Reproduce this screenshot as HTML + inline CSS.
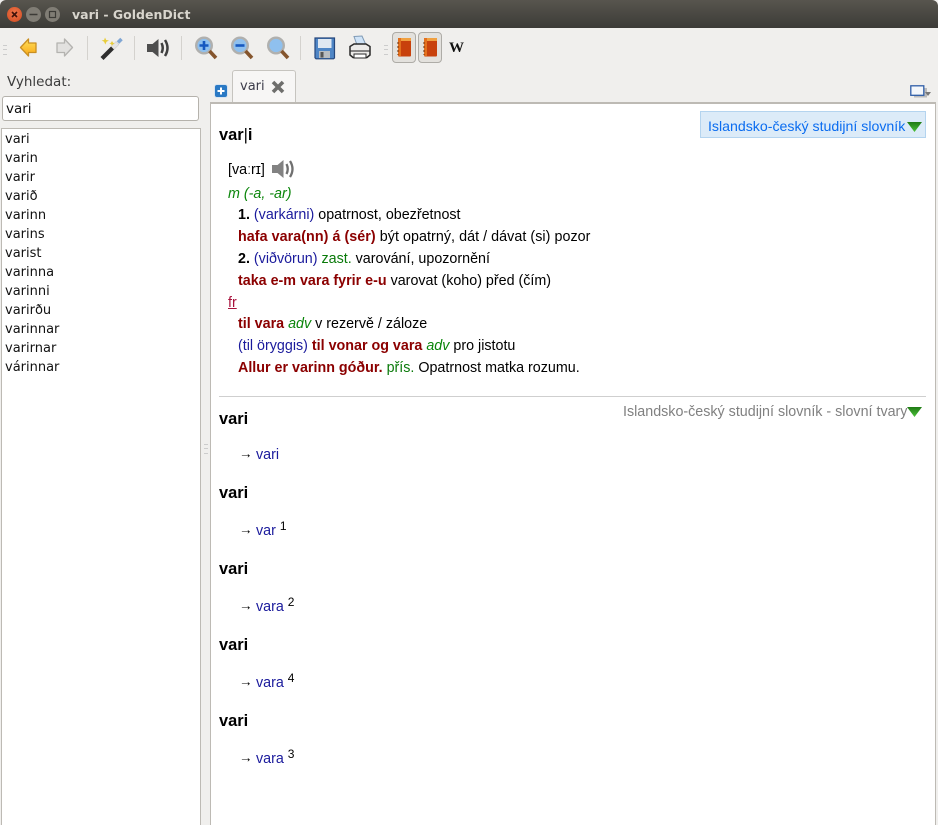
<!DOCTYPE html>
<html><head><meta charset="utf-8"><style>
html,body{margin:0;padding:0;background:#f1f0ee}
#r{position:relative;width:938px;height:825px;overflow:hidden;background:#f0efed;font-family:"Liberation Sans",sans-serif;font-size:14.3px;color:#000}
.a{position:absolute;white-space:nowrap}
.l{position:absolute;white-space:nowrap;line-height:20px;height:20px;margin-top:1px}
.u{font-family:"DejaVu Sans",sans-serif;font-size:13px}
.w{position:absolute;left:5px;white-space:nowrap;font-family:"DejaVu Sans",sans-serif;font-size:13px;line-height:19px;color:#111}
.b{color:#8b0000;font-weight:bold}
.n{color:#1a1a9c}
.g{color:#0a7a0a}
.i{font-style:italic;color:#0a850a}
.l.h{font-weight:bold;font-size:16.4px;margin-top:0}
.ar{display:inline-block;width:16px;font-size:13.5px;position:relative;top:-1px;left:-1px}
sup{font-size:12px;line-height:0;vertical-align:5px}
svg{position:absolute;overflow:visible}
.sep{position:absolute;width:1px;top:36px;height:24px;background:#d4d2ce}
.grip{position:absolute;width:4px;height:8px;border-top:1px solid #ccc;border-bottom:1px solid #ccc}
.grip:after{content:"";position:absolute;left:0;right:0;top:3px;height:1px;background:#ccc}
</style></head><body><div id="r">
<svg width="0" height="0" style="position:absolute"><defs><linearGradient id="gy" x1="0" y1="0" x2="0" y2="1"><stop offset="0" stop-color="#ffe05a"/><stop offset="1" stop-color="#f9a818"/></linearGradient><linearGradient id="gt" x1="0" y1="0" x2="0" y2="1"><stop offset="0" stop-color="#1f7a14"/><stop offset="1" stop-color="#4cc23a"/></linearGradient></defs></svg>
<!-- titlebar -->
<div class="a" style="left:0;top:0;width:938px;height:28px;background:linear-gradient(#58554e,#3c3b37);border-radius:6px 6px 0 0"></div>
<div class="a" style="left:7px;top:7px;width:15px;height:15px;border-radius:50%;background:radial-gradient(circle at 50% 40%,#f0764a,#cf4a20)"></div>
<div class="a" style="left:26px;top:7px;width:15px;height:15px;border-radius:50%;background:#807d75"></div>
<div class="a" style="left:45px;top:7px;width:15px;height:15px;border-radius:50%;background:#807d75"></div>
<svg style="left:0;top:0" width="70" height="28"><path d="M12 12l5 5M17 12l-5 5" stroke="#41140a" stroke-width="1.600"/><path d="M29.500 14.500h8" stroke="#3c3b37" stroke-width="1.500"/><rect x="49.500" y="11.500" width="6" height="6" fill="none" stroke="#3c3b37" stroke-width="1.200"/></svg>
<div class="a" style="left:72px;top:6px;font-family:'DejaVu Sans',sans-serif;font-size:12.500px;font-weight:bold;line-height:18px;color:#d8d5cd">vari - GoldenDict</div>
<!-- toolbar -->
<div class="grip" style="left:3px;top:45px"></div>
<svg style="left:19px;top:38px" width="20" height="20"><path d="M1.500 9.500L9.500 1V5H17V14.500H9.500V18z" fill="url(#gy)" stroke="#c98f22" stroke-width="1.300" stroke-linejoin="round"/></svg>
<svg style="left:55px;top:38px" width="20" height="20"><path d="M17.500 9.500L9.500 1V5H2V14.500H9.500V18z" fill="#e2e1df" stroke="#b4b3b0" stroke-width="1.300" stroke-linejoin="round"/></svg>
<div class="sep" style="left:87px"></div>
<svg style="left:99px;top:36px" width="24" height="24"><path d="M3 22.500L18.500 7" stroke="#2e2e2e" stroke-width="4.200"/><path d="M13.500 12l5-5" stroke="#e4e4e4" stroke-width="4.200"/><path d="M6 1.500l1.200 2.500 2.800.5-2.500 1.200-1.200 2.800-1.200-2.800-2.500-1.200 2.500-.5zM13 5l1 1.800 1.800.5-1.800.7-1 1.800-1-1.800-1.800-.7 1.800-.5z" fill="#e8cd3a"/><path d="M19 6.500l3.500-3.500" stroke="#7fa6d4" stroke-width="3.500"/></svg>
<div class="sep" style="left:134px"></div>
<svg style="left:146px;top:37px" width="26" height="22"><path d="M1 7h5.500L12.500 2v18L6.500 15H1z" fill="#4e4e4e"/><path d="M15.500 6q2.500 5 0 10M19 3q5 8 0 16" fill="none" stroke="#404040" stroke-width="2.500"/></svg>
<div class="sep" style="left:181px"></div>
<svg style="left:194px;top:36px" width="24" height="24"><circle cx="10" cy="9.500" r="7.800" fill="#8fc0ee" stroke="#b0b0ae" stroke-width="2.400"/><path d="M15.500 15l6.500 7" stroke="#85552d" stroke-width="3.600"/><path d="M5.500 9.500h9M10 5v9" stroke="#1658c0" stroke-width="2.600"/></svg>
<svg style="left:230px;top:36px" width="24" height="24"><circle cx="10" cy="9.500" r="7.800" fill="#8fc0ee" stroke="#b0b0ae" stroke-width="2.400"/><path d="M15.500 15l6.500 7" stroke="#85552d" stroke-width="3.600"/><path d="M5.500 9.500h9" stroke="#1658c0" stroke-width="2.600"/></svg>
<svg style="left:266px;top:36px" width="24" height="24"><circle cx="10" cy="9.500" r="7.800" fill="#8fc0ee" stroke="#b0b0ae" stroke-width="2.400"/><path d="M15.500 15l6.500 7" stroke="#85552d" stroke-width="3.600"/></svg>
<div class="sep" style="left:300px"></div>
<svg style="left:314px;top:37px" width="22" height="23"><path d="M1 1h19.500v20l-1 .8H2l-1-1z" fill="#4f86c6" stroke="#26487e" stroke-width="1.200"/><rect x="4" y="2" width="13.500" height="9" fill="#dfe8f2"/><rect x="5" y="14" width="11" height="7" fill="#b8bcc0"/><rect x="6.500" y="15" width="3" height="5.500" fill="#555"/></svg>
<svg style="left:348px;top:35px" width="24" height="26"><path d="M6 1.500l8-.5 4 9H9z" fill="#cfe3f7" stroke="#7f9ab5"/><path d="M2 11.500l4-2.500h12l4 2.500v8.500l-3 2.500H5l-3-2.500z" fill="#ecebe9" stroke="#2a2a2a" stroke-width="1.500"/><path d="M2.500 16h19" stroke="#444" stroke-width="1.200"/><rect x="6" y="19" width="12" height="4" fill="#fff" stroke="#2a2a2a"/></svg>
<div class="grip" style="left:384px;top:45px"></div>
<div class="a" style="left:392px;top:32px;width:22px;height:29px;border:1px solid #aeaca7;border-radius:4px;background:#e3e1dd"></div>
<div class="a" style="left:418px;top:32px;width:22px;height:29px;border:1px solid #aeaca7;border-radius:4px;background:#e3e1dd"></div>
<svg style="left:397px;top:37px" width="15" height="20"><rect x="1" y="1" width="13" height="18.500" rx="1" fill="#c8410c"/><rect x="2" y="1" width="12" height="3" fill="#f0a040"/><rect x="1" y="1" width="3" height="18" fill="#e2701e"/><path d="M1 5v13" stroke="#6a2a08" stroke-dasharray="2 2"/></svg>
<svg style="left:423px;top:37px" width="15" height="20"><rect x="1" y="1" width="13" height="18.500" rx="1" fill="#c8410c"/><rect x="2" y="1" width="12" height="3" fill="#f0a040"/><rect x="1" y="1" width="3" height="18" fill="#e2701e"/><path d="M1 5v13" stroke="#6a2a08" stroke-dasharray="2 2"/></svg>
<div class="a" style="left:449px;top:39px;font-family:'Liberation Serif',serif;font-weight:bold;font-size:15px;line-height:18px;color:#111">W</div>
<!-- left -->
<div class="a u" style="left:7px;top:73px;font-size:13.500px;line-height:18px;color:#3c3c3c">Vyhledat:</div>
<div class="a" style="left:2px;top:96px;width:195px;height:23px;background:#fff;border:1px solid #b5b2ac;border-radius:3px"></div>
<div class="a u" style="left:6px;top:100px;font-size:13.500px;line-height:18px;color:#111">vari</div>
<div class="a" style="left:1px;top:128px;width:198px;height:700px;background:#fff;border:1px solid #bdbab4"></div>
<div class="w" style="top:130px">vari</div>
<div class="w" style="top:149px">varin</div>
<div class="w" style="top:168px">varir</div>
<div class="w" style="top:187px">varið</div>
<div class="w" style="top:206px">varinn</div>
<div class="w" style="top:225px">varins</div>
<div class="w" style="top:244px">varist</div>
<div class="w" style="top:263px">varinna</div>
<div class="w" style="top:282px">varinni</div>
<div class="w" style="top:301px">varirðu</div>
<div class="w" style="top:320px">varinnar</div>
<div class="w" style="top:339px">varirnar</div>
<div class="w" style="top:358px">várinnar</div>
<div class="grip" style="left:204px;top:444px;width:4px"></div>
<!-- tabs -->
<div class="a" style="left:214px;top:84px;width:14px;height:14px;background:#2a79c4;border-radius:3px;border:1px solid #d8e4f0;box-sizing:border-box"></div>
<svg style="left:214px;top:84px" width="14" height="14"><path d="M3.500 7h7M7 3.500v7" stroke="#fff" stroke-width="2"/></svg>
<div class="a" style="left:232px;top:70px;width:62px;height:33px;background:#f7f6f5;border:1px solid #c6c4bf;border-bottom:0;border-radius:3px 3px 0 0"></div>
<div class="a u" style="left:240px;top:78px;line-height:18px;color:#3c3c4a">vari</div>
<svg style="left:271px;top:80px" width="14" height="14"><path d="M2 2l10 10M12 2L2 12" stroke="#6e6e6c" stroke-width="3.600"/></svg>
<svg style="left:910px;top:85px" width="22" height="14"><rect x="4" y="3" width="13" height="9.500" fill="#bbb"/><rect x=".8" y=".8" width="13" height="9.500" fill="#f4f7fb" stroke="#2f5ea8" stroke-width="1.300"/><path d="M15 7h6l-3 4z" fill="#777"/></svg>
<!-- content -->
<div class="a" style="left:210px;top:102px;width:725px;height:730px;background:#fff;border-left:1px solid #bdbab4;box-sizing:border-box;border-top:2px solid #bdbab4"></div>
<div class="a" style="left:935px;top:102px;width:1px;height:723px;background:#bdbab4"></div>
<div class="a" style="left:700px;top:111px;width:224px;height:25px;background:#dcebf8;border:1px solid #b4d4ef"></div>
<div class="a" style="left:708px;top:116px;line-height:20px;font-size:14.15px;color:#0a6cf0">Islandsko-český studijní slovník</div>
<svg style="left:907px;top:122px" width="15" height="10"><path d="M0 0h15L7.500 10z" fill="url(#gt)"/></svg>
<div class="l h" style="left:219px;top:125px">var<span style="font-weight:normal">|</span>i</div>
<div class="l" style="left:228px;top:159px">[vaːrɪ]</div>
<svg style="left:271px;top:158px" width="25" height="22"><path d="M1 7h5.500L12.500 2v18L6.500 15H1z" fill="#828282"/><path d="M15.500 6q2.500 5 0 10M19 3q5 8 0 16" fill="none" stroke="#707070" stroke-width="2.300"/></svg>
<div class="l i" style="left:228px;top:183px">m (-a, -ar)</div>
<div class="l" style="left:238px;top:204px"><b>1.</b> <span class="n">(varkárni)</span> opatrnost, obezřetnost</div>
<div class="l" style="left:238px;top:226px;letter-spacing:.05px"><span class="b">hafa vara(nn) á (sér)</span> být opatrný, dát / dávat (si) pozor</div>
<div class="l" style="left:238px;top:248px"><b>2.</b> <span class="n">(viðvörun)</span> <span class="g">zast.</span> varování, upozornění</div>
<div class="l" style="left:238px;top:270px"><span class="b">taka e-m vara fyrir e-u</span> varovat (koho) před (čím)</div>
<div class="l" style="left:228px;top:292px;color:#a8123c;text-decoration:underline">fr</div>
<div class="l" style="left:238px;top:313px"><span class="b">til vara</span> <span class="i">adv</span> v rezervě / záloze</div>
<div class="l" style="left:238px;top:335px"><span class="n">(til öryggis)</span> <span class="b">til vonar og vara</span> <span class="i">adv</span> pro jistotu</div>
<div class="l" style="left:238px;top:357px"><span class="b">Allur er varinn góður.</span> <span class="g">přís.</span> Opatrnost matka rozumu.</div>
<div class="a" style="left:219px;top:396px;width:707px;height:1px;background:#cfcfcf"></div>
<div class="l" style="left:623px;top:401px;font-size:14.3px;color:#808080">Islandsko-český studijní slovník - slovní tvary</div>
<svg style="left:907px;top:407px" width="15" height="10"><path d="M0 0h15L7.500 10z" fill="url(#gt)"/></svg>
<div class="l h" style="left:219px;top:409px">vari</div>
<div class="l" style="left:240px;top:444px"><span class="ar">→</span><span class="n">vari</span></div>
<div class="l h" style="left:219px;top:483px">vari</div>
<div class="l" style="left:240px;top:520px"><span class="ar">→</span><span class="n">var</span> <sup>1</sup></div>
<div class="l h" style="left:219px;top:559px">vari</div>
<div class="l" style="left:240px;top:596px"><span class="ar">→</span><span class="n">vara</span> <sup>2</sup></div>
<div class="l h" style="left:219px;top:635px">vari</div>
<div class="l" style="left:240px;top:672px"><span class="ar">→</span><span class="n">vara</span> <sup>4</sup></div>
<div class="l h" style="left:219px;top:711px">vari</div>
<div class="l" style="left:240px;top:748px"><span class="ar">→</span><span class="n">vara</span> <sup>3</sup></div>
</div></body></html>
